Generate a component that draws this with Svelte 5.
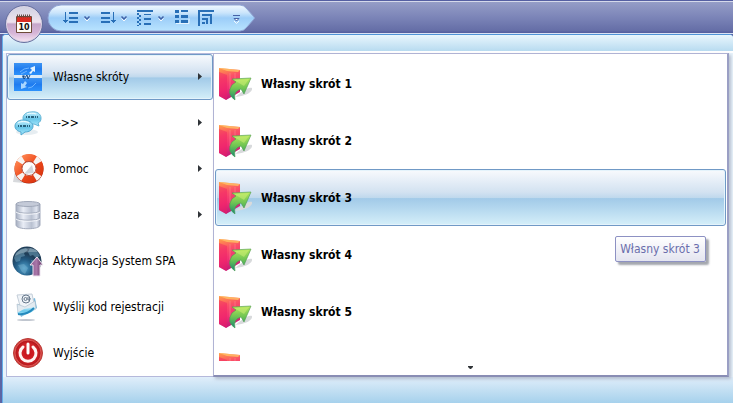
<script lang="ts">
  type MenuEntry = { icon: string; label: string; submenu?: boolean };

  const entries: MenuEntry[] = [
    { icon: "shortcuts", label: "Własne skróty", submenu: true },
    { icon: "chat", label: "-->>", submenu: true },
    { icon: "help", label: "Pomoc", submenu: true },
    { icon: "database", label: "Baza", submenu: true },
    { icon: "globe", label: "Aktywacja System SPA" },
    { icon: "mail", label: "Wyślij kod rejestracji" },
    { icon: "power", label: "Wyjście" },
  ];
  const shortcuts = [1, 2, 3, 4, 5, 6].map((n) => `Własny skrót ${n}`);

  let active = $state(0);
  let hovered = $state(2);
</script>

{#snippet chevron(name: string)}
  <button class="tool drop" aria-label={name}>
    <svg width="10" height="18" viewBox="0 0 10 18">
      <path d="M2.500 7.500L5 10l2.500-2.500" fill="none" stroke="#4161a5" stroke-width="1.500" />
      <path d="M2.500 9.500L5 12l2.500-2.500" fill="none" stroke="#f4faff" />
    </svg>
  </button>
{/snippet}

{#snippet menuIcon(name: string)}
  <svg class="icon" width="32" height="32" viewBox="0 0 32 32" aria-hidden="true">
    {#if name === "shortcuts"}
      <path d="M2 2h28v12H2z" fill="url(#sky)" />
      <path d="M2 17h28v13H2z" fill="url(#sky)" />
      <path d="M2 14h28v3H2z" fill="#d9ebfa" />
      <path d="M17 12l3-3-2-2 5-2v6l-2-1-2 3z" fill="#e3f3ff" />
      <path d="M8 11l4-3 5-1M9 13l6-3" stroke="#6fb5ff" fill="none" />
      <path d="M13 20l-2 3-2-1v6l6-2-2-1 2-3z" fill="#a9d6ff" />
      <path d="M16 27l4-1 4-4" stroke="#6fb5ff" fill="none" />
      <path d="M11 14l1 4 3-4 1 4 2-4M10 16l3-1" stroke="#174a86" fill="none" />
    {:else if name === "chat"}
      <ellipse cx="15" cy="25" rx="11" ry="3" fill="#e6edf1" />
      <path d="M19 5c6-1 10 2 10 6 0 3-1 4-3 5l1 3-5-2c-7 1-11-2-11-6 0-3 3-6 8-6z" fill="url(#bubble)" stroke="#65b6d7" />
      <path d="M11 13c6 0 10 3 10 6 0 4-4 6-8 6l-4 3v-3c-4-1-6-3-6-6s3-6 8-6z" fill="url(#bubble)" stroke="#51a8cf" />
      <path d="M14 10h12M6 19h12" stroke="#28627d" stroke-width="2" stroke-dasharray="1 1 2 1 3 1" />
      <path d="M15 7c3-1 6-1 9 0M6 16c3-2 8-2 11 0" stroke="#f1fdff" stroke-width="1" fill="none" />
    {:else if name === "help"}
      <path d="M3 18L1 29l10 1z" fill="#d8dadd" />
      <path d="M4 26c5 5 18 6 24 1l1-5z" fill="#cfd2d6" />
      <circle cx="17" cy="16" r="11" fill="none" stroke="#a9220b" stroke-width="7" />
      <circle cx="17" cy="15.500" r="11" fill="none" stroke="url(#orange)" stroke-width="7" />
      <circle cx="17" cy="15.500" r="11" fill="none" stroke="#f7f3f1" stroke-width="7" stroke-dasharray="5 12.280" stroke-dashoffset="-6" />
      <circle cx="17" cy="15.500" r="7" fill="#fdfdfe" stroke="#b74935" />
      <path d="M12 21l8-9 2 8z" fill="#d2d5db" />
    {:else if name === "database"}
      <path d="M4 5v21c0 5 24 5 24 0V5z" fill="url(#steel)" stroke="#a3abbd" />
      <path d="M4 12c3 3 21 3 24 0M4 19c3 3 21 3 24 0" fill="none" stroke="#a1a9ba" />
      <path d="M4 13c3 3 21 3 24 0M4 20c3 3 21 3 24 0" fill="none" stroke="#f5f7fb" />
      <ellipse cx="16" cy="5" rx="12" ry="2.500" fill="#c4cad8" stroke="#a0a8b9" />
    {:else if name === "globe"}
      <circle cx="15" cy="16" r="14.500" fill="url(#globeFill)" />
      <path d="M4 8l5-4 5-1 2 2-4 3 1 3-4 1-1 4-4 1-2-4zM18 3l6 2 4 6-4 2-3-3-3 1-2-4zM6 20l6-1 4 4-3 6-3-2zM19 15l5 1 3-2-2 6-4 2z" fill="#7fb4ce" opacity=".45" />
      <path d="M3 11C6 3 20 0 26 7c-7 0-15-1-23 4z" fill="#fff" opacity=".25" />
      <path d="M25 12l6 8h-3v11h-7V20h-3z" fill="url(#violet)" stroke="#eee4ef" />
    {:else if name === "mail"}
      <ellipse cx="14" cy="29" rx="9" ry="1" fill="#c0c6cf" />
      <path d="M5 14l18-7 2 10-16 9z" fill="#78b9dc" />
      <path d="M5 4l15-1 3 14-13 5z" fill="#f0f4f8" stroke="#c4ced9" />
      <circle cx="14" cy="8" r="4" fill="none" stroke="#67788b" />
      <path d="M16 6v3q2 1 2-2" fill="none" stroke="#67788b" />
      <circle cx="13.500" cy="8" r="1.500" fill="none" stroke="#67788b" />
      <path d="M5 13l8 3 10-6 1 8-14 6-4-1z" fill="#e2eaf0" stroke="#aabbca" stroke-width=".6" />
      <path d="M5 22l7-4 11-2c-1 5-6 7-13 8z" fill="url(#bubble)" />
      <path d="M6 23c7 1 12-2 16-6" fill="none" stroke="#258abd" stroke-width="2" />
    {:else if name === "power"}
      <circle cx="16" cy="16" r="14.500" fill="url(#redFill)" stroke="#b83a36" />
      <circle cx="16" cy="16" r="13" fill="none" stroke="#ef7770" stroke-width="1" opacity=".6" />
      <path d="M11 10a8 8 0 1 0 10 0" fill="none" stroke="#fff5f3" stroke-width="3" stroke-linecap="round" />
      <path d="M16 7v9" stroke="#fff" stroke-width="3" stroke-linecap="round" />
    {/if}
  </svg>
{/snippet}

<svg class="defs" width="0" height="0" aria-hidden="true">
  <defs>
    <linearGradient id="sky" x2="0" y2="1"><stop stop-color="#3d93f2" /><stop offset=".5" stop-color="#1f7cf0" /><stop offset="1" stop-color="#2c91fb" /></linearGradient>
    <linearGradient id="bubble" x2="0" y2="1"><stop stop-color="#c9f2ff" /><stop offset=".5" stop-color="#69c6e8" /><stop offset="1" stop-color="#a9eaff" /></linearGradient>
    <linearGradient id="orange" x2="1" y2="1"><stop stop-color="#ff8b55" /><stop offset=".5" stop-color="#ef4b1e" /><stop offset="1" stop-color="#d8330f" /></linearGradient>
    <linearGradient id="steel"><stop stop-color="#a4adbf" /><stop offset=".3" stop-color="#e9edf6" /><stop offset=".65" stop-color="#b9c1d1" /><stop offset=".85" stop-color="#dfe4ef" /><stop offset="1" stop-color="#a0a8ba" /></linearGradient>
    <radialGradient id="globeFill" cx=".4" cy=".75"><stop stop-color="#51a3cf" /><stop offset=".6" stop-color="#235b83" /><stop offset="1" stop-color="#203e58" /></radialGradient>
    <linearGradient id="violet"><stop stop-color="#8c5a91" /><stop offset=".5" stop-color="#a977a8" /><stop offset="1" stop-color="#582b5e" /></linearGradient>
    <radialGradient id="redFill"><stop stop-color="#c50e17" /><stop offset=".6" stop-color="#d4262a" /><stop offset=".85" stop-color="#b4171c" /><stop offset="1" stop-color="#e45a53" /></radialGradient>
    <linearGradient id="folder" x2=".2" y2="1"><stop stop-color="#ffa045" /><stop offset=".35" stop-color="#fb5068" /><stop offset=".7" stop-color="#f02f74" /><stop offset="1" stop-color="#c31c78" /></linearGradient>
    <linearGradient id="leaf" x2="0" y2="1"><stop stop-color="#b5e65a" /><stop offset=".5" stop-color="#6cc353" /><stop offset="1" stop-color="#168873" /></linearGradient>
    <linearGradient id="pill" x2="0" y2="1"><stop stop-color="#f2f9ff" /><stop offset=".3" stop-color="#cbe5fb" /><stop offset=".5" stop-color="#9ccdf8" /><stop offset="1" stop-color="#b9e4ff" /></linearGradient>
  </defs>
</svg>

<div class="window">
  <header class="titlebar">
    <button class="orb" aria-label="Menu">
      <svg width="18" height="20" viewBox="0 0 18 20">
        <rect x="1" y="2" width="16" height="17" rx="1" fill="#6d4a38" />
        <rect x="2" y="8" width="14" height="10" fill="#fffdf8" />
        <rect x="2" y="3" width="14" height="5" fill="#d92b22" />
        <path d="M2 2h14" stroke="#654d45" stroke-width="3" stroke-dasharray="1 1" />
        <text x="9" y="16" text-anchor="middle">10</text>
      </svg>
    </button>
    <nav class="quick" aria-label="Pasek szybkiego dostępu">
      <svg class="pill" width="210" height="28" viewBox="0 0 210 28" aria-hidden="true">
        <path d="M14 1H193q4 0 7 4l7 8q1 1 0 2l-7 8q-3 4-7 4H14A13 13 0 0 1 14 1z" fill="url(#pill)" stroke="#8fa5d5" />
      </svg>
      <div class="split">
        <button class="tool" aria-label="Sortuj rosnąco">
          <svg width="18" height="18" viewBox="0 0 18 18">
            <path d="M7 3h9v2H7zM7 8h9v2H7zM7 12h9v2H7zM3 3h1v8h2v1H5v1H4v1H3v-1H2v-1H1v-1h2z" fill="#286fb7" />
          </svg>
        </button>
        {@render chevron("Opcje sortowania rosnąco")}
      </div>
      <div class="split">
        <button class="tool" aria-label="Sortuj malejąco">
          <svg width="18" height="18" viewBox="0 0 18 18">
            <path d="M2 3h9v2H2zM2 8h9v2H2zM2 12h9v2H2zM14 3h1v8h2v1h-1v1h-1v1h-1v-1h-1v-1h-1v-1h2z" fill="#286fb7" />
          </svg>
        </button>
        {@render chevron("Opcje sortowania malejąco")}
      </div>
      <div class="split">
        <button class="tool" aria-label="Grupuj">
          <svg width="18" height="18" viewBox="0 0 18 18">
            <path d="M1 1h16v2H1zM8 5h7v1H8zM8 9h7v2H8zM8 14h7v2H8z" fill="#286fb7" />
            <path d="M1 4h2v2H1zM3 6h2v2H3zM1 8h2v2H1zM3 10h2v2H3zM1 12h2v2H1zM3 14h2v2H3zM1 16h2v1H1z" fill="#286fb7" />
          </svg>
        </button>
        {@render chevron("Opcje grupowania")}
      </div>
      <button class="tool" aria-label="Lista">
        <svg width="18" height="18" viewBox="0 0 18 18">
          <path d="M2 1h4v3H2zM2 6h4v3H2zM2 11h4v3H2zM8 1h7v2H8zM8 6h7v3H8zM8 11h7v3H8z" fill="#286fb7" />
          <path d="M3 14.500h13V9.500" stroke="#e6f4ff" fill="none" />
        </svg>
      </button>
      <button class="tool" aria-label="Układ">
        <svg width="18" height="18" viewBox="0 0 18 18">
          <path d="M0 1h16v2H2v14H0zM4 5h10v10h-2V7H4zM4 9h6v6H8v-4H4zM4 13h3v2H4z" fill="#286fb7" />
        </svg>
      </button>
      <button class="tool overflow" aria-label="Więcej poleceń">
        <svg width="10" height="18" viewBox="0 0 10 18">
          <path d="M2 6.500h7M3 9.500h5L5.500 12z" fill="#fff" stroke="#4762a7" />
          <path d="M3 12l2.500 2.500L8 12" fill="none" stroke="#f4faff" />
        </svg>
      </button>
    </nav>
  </header>

  <main class="frame">
    <div class="strip"></div>
    <div class="panes">
      <nav class="menu" aria-label="Menu główne">
        {#each entries as entry, i}
          <button class="entry" class:active={active === i} onclick={() => (active = i)}>
            {@render menuIcon(entry.icon)}
            <span class="label">{entry.label}</span>
            {#if entry.submenu}
              <svg class="arrow" width="5" height="8" viewBox="0 0 5 8" aria-hidden="true">
                <path d="M0 0v7l4-3.500z" fill="#303438" />
              </svg>
            {/if}
          </button>
        {/each}
      </nav>

      <section class="submenu" aria-label="Własne skróty">
        <div class="list">
          {#each shortcuts as label, i}
            <button class="shortcut" class:hovered={hovered === i} onmouseenter={() => (hovered = i)}>
              <svg width="34" height="34" viewBox="0 0 34 34" aria-hidden="true">
                <path d="M16 30c4-3 13-11 17-9 1 4-6 8-17 9z" fill="#d8dadc" />
                <path d="M0 1l21 2v22L7 33l-7-4z" fill="url(#folder)" />
                <path d="M0 5l8 3v25l-8-4z" fill="#f01d66" opacity=".45" />
                <path d="M0 1l21 2-2 2-11-1z" fill="#ffc064" opacity=".8" />
                <path d="M11 6v16M16 6v8" stroke="#ff8f95" opacity=".5" />
                <path d="M13 12l19-1-7 16-3-5q-8 2-6 11-9-6-3-15l4-3z" fill="url(#leaf)" stroke="#4d9a50" stroke-width=".6" />
                <path d="M15 13l15-1-5 7z" fill="#d2f278" opacity=".5" />
              </svg>
              <span>{label}</span>
            </button>
          {/each}
        </div>
        <button class="more" aria-label="Przewiń w dół">
          <svg width="6" height="4" viewBox="0 0 6 4"><path d="M0 0h5v1L3 3H2L0 1z" fill="#303438" /></svg>
        </button>
        <div class="tooltip" role="tooltip">{shortcuts[2]}</div>
      </section>
    </div>
    <footer class="bottom"></footer>
  </main>
</div>

<style>
  :global(body) {
    margin: 0;
  }
  .defs {
    position: absolute;
  }
  .window {
    display: flex;
    flex-direction: column;
    box-sizing: border-box;
    min-height: 100vh;
    padding-left: 2px;
    background: #5b65a4;
    font-family: "DejaVu Sans Condensed", Tahoma, "DejaVu Sans", sans-serif;
    font-size: 12px;
    line-height: 16px;
    color: #000;
  }
  button {
    margin: 0;
    padding: 0;
    border: 0;
    background: none;
    font: inherit;
    color: inherit;
    text-align: left;
  }
  svg {
    display: block;
    flex: none;
  }
  .titlebar {
    position: relative;
    box-sizing: border-box;
    height: 34px;
    margin-left: -2px;
    padding: 3px 0 0 47px;
    border-top: 1px solid #555fa2;
    border-bottom: 1px solid #d9e2f4;
    background: linear-gradient(#d5d9eb 1px, #959dc7 1px, #7c85b8 16px, #646da6 30px, #5660a0 31px);
  }
  .orb {
    position: absolute;
    z-index: 2;
    top: 4px;
    left: 5px;
    display: flex;
    align-items: center;
    justify-content: center;
    box-sizing: border-box;
    width: 38px;
    height: 38px;
    border: 1px solid #66709f;
    border-radius: 50%;
    background: linear-gradient(#cfd1e1, #eee3ee 45%, #c5a6ca 50%, #d6b5d7 75%, #f8e6f3);
    box-shadow: inset 0 0 0 1px #dcd5e6;
  }
  .orb text {
    font: bold 8px "DejaVu Sans", sans-serif;
    fill: #17110f;
  }
  .quick {
    position: relative;
    display: flex;
    align-items: center;
    gap: 7px;
    box-sizing: border-box;
    width: 210px;
    height: 28px;
    padding-left: 15px;
  }
  .pill {
    position: absolute;
    inset: 0;
  }
  .split {
    display: flex;
    gap: 2px;
  }
  .tool {
    position: relative;
  }
  .overflow {
    margin-left: 8px;
  }
  .frame {
    display: flex;
    flex: 1;
    flex-direction: column;
    border-top: 1px solid #4f94d7;
    border-left: 1px solid #63aee9;
    border-radius: 4px 4px 0 0;
    background: #e9f4fc;
  }
  .strip {
    height: 16px;
    border-radius: 3px 3px 0 0;
    border-bottom: 2px solid #fff;
    background: linear-gradient(#e9f6fd, #b8dbf0);
  }
  .panes {
    display: grid;
    grid-template-columns: 207px 1fr;
    padding: 0 4px 0 3px;
  }
  .menu {
    display: flex;
    flex-direction: column;
    border: 1px solid #b5b9db;
    border-right: 0;
    background: #fff;
  }
  .entry {
    display: flex;
    align-items: center;
    box-sizing: border-box;
    height: 46px;
    padding: 0 9px 0 4px;
    border: 1px solid transparent;
    border-radius: 3px;
  }
  .label {
    flex: 1;
    margin-left: 9px;
    white-space: nowrap;
  }
  .active,
  .hovered {
    border-color: #7099c6;
    background: linear-gradient(#f8fafd, #d3e2f1 40%, #c0d9ed 50%, #a2cae8 52%, #b2d6ee 68%, #d5eff9);
    box-shadow: inset 0 0 0 1px #e4f3fb;
  }
  .submenu {
    position: relative;
    z-index: 1;
    display: flex;
    flex-direction: column;
    box-sizing: border-box;
    padding: 1px 1px 0;
    border: 1px solid #b0b3d4;
    border-right: 2px solid #9a9fc4;
    border-bottom: 2px solid #898db4;
    background: #fff;
    box-shadow: 2px 2px 3px #8c93a688;
  }
  .list {
    flex: 1 1 0px;
    min-height: 0;
    overflow: hidden;
    contain: size;
  }
  .shortcut {
    display: flex;
    align-items: center;
    gap: 8px;
    box-sizing: border-box;
    width: 100%;
    height: 57px;
    padding-left: 3px;
    border: 1px solid transparent;
    border-radius: 3px;
    font-weight: bold;
  }
  .shortcut.hovered {
    border-color: #7099c6;
  }
  .more {
    display: flex;
    align-items: center;
    justify-content: center;
    height: 14px;
  }
  .tooltip {
    position: absolute;
    top: 182px;
    right: 21px;
    padding: 4px 5px 4px 4px;
    border: 1px solid #8d91c3;
    border-radius: 2px;
    background: linear-gradient(#fff, #e4e5f0);
    box-shadow: 3px 3px 2px #777b85aa;
    color: #6a6eac;
  }
  .bottom {
    flex: 1;
    min-height: 26px;
    background: linear-gradient(#e0eefa, #a6d1ec);
  }
</style>
